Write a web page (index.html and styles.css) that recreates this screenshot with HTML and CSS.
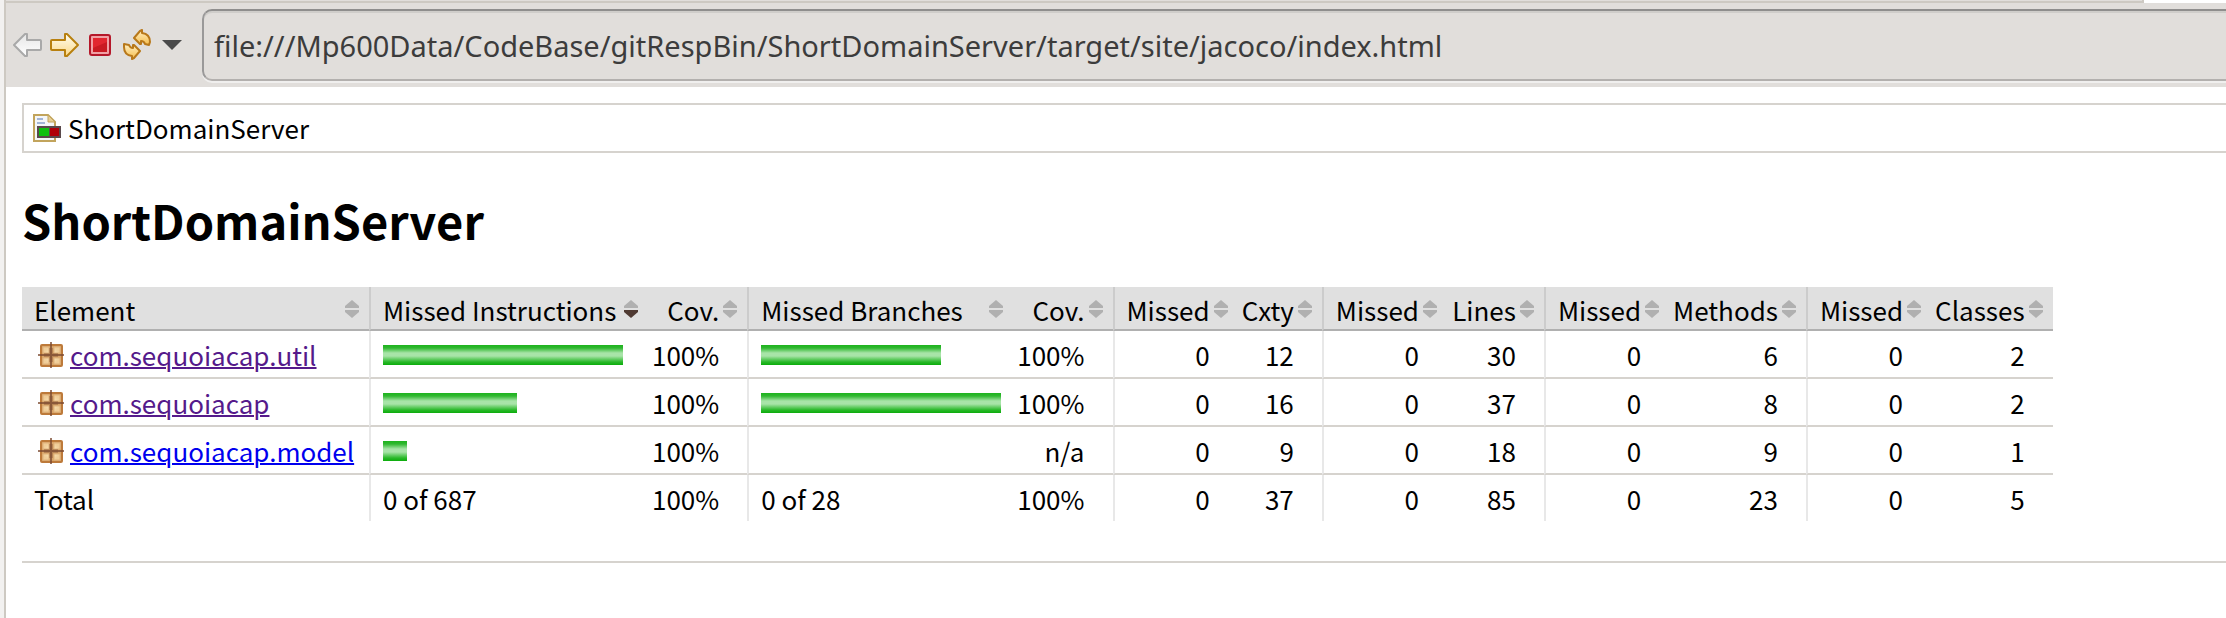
FILE: index.html
```html
<!DOCTYPE html>
<html lang="en">
<head>
<meta charset="utf-8">
<title>ShortDomainServer</title>
<link rel="stylesheet" href="styles.css">
</head>
<body>
<svg class="defs" aria-hidden="true">
  <defs>
    <linearGradient id="gold" x1="0" y1="0" x2="0" y2="1"><stop offset="0" stop-color="#fffdf0"/><stop offset="1" stop-color="#fbd98a"/></linearGradient>
    <linearGradient id="gold2" x1="0" y1="0" x2="0" y2="1"><stop offset="0" stop-color="#fff0c4"/><stop offset="1" stop-color="#f6bd4c"/></linearGradient>
    <linearGradient id="silver" x1="0" y1="0" x2="0" y2="1"><stop offset="0" stop-color="#e6e6e6"/><stop offset="1" stop-color="#ffffff"/></linearGradient>
    <radialGradient id="pane"><stop offset="0" stop-color="#ffeec4"/><stop offset="1" stop-color="#f0cd98"/></radialGradient>
    <symbol id="sort" viewBox="0 0 14 18"><path class="up" d="M7 0L14 6V8H0V6Z"/><path class="down" d="M0 10H14V12L7 18L0 12Z"/></symbol>
    <symbol id="package" viewBox="0 0 28 28">
      <rect x="4" y="4" width="21" height="21" rx="1" fill="#d8a468" stroke="#bd7a3a" stroke-width="2"/>
      <path d="M6 6H12V12H6ZM17 6H23V12H17ZM6 17H12V23H6ZM17 17H23V23H17Z" fill="url(#pane)" stroke="#e0b37c"/>
      <path d="M14 1V27M1 14H27" stroke="#7b4a30" stroke-opacity=".75" stroke-width="2"/>
      <path d="M14 7V21M7 14H21" stroke="#7b4a30" stroke-opacity=".35" stroke-width="4"/>
    </symbol>
  </defs>
</svg>
<div class="window">
  <div class="tab-edge"></div>
  <header class="toolbar">
    <nav class="tools" aria-label="Navigation">
      <button class="tool" aria-label="Back"><svg width="30" height="26" viewBox="0 0 30 26"><path d="M1 13L12 2H14V8H27Q28 8 28 9V17Q28 18 27 18H14V24H12Z" fill="url(#silver)" stroke="#a9a9a9" stroke-width="2" stroke-linejoin="round"/></svg></button>
      <button class="tool" aria-label="Forward"><svg width="30" height="26" viewBox="0 0 30 26"><path d="M28 13L17 2H15V8H2Q1 8 1 9V17Q1 18 2 18H15V24H17Z" fill="url(#gold)" stroke="#b8800f" stroke-width="2" stroke-linejoin="round"/></svg></button>
      <button class="tool tool-stop" aria-label="Stop"><svg width="22" height="22" viewBox="0 0 22 22"><rect x="1" y="1" width="20" height="20" rx="2" fill="#f0a0a4" stroke="#b5182a" stroke-width="2"/><rect x="4" y="4" width="14" height="14" fill="#e2262f"/><path d="M4 18V14L18 8V18Z" fill="#c91a22"/></svg></button>
      <button class="tool" aria-label="Refresh"><svg width="30" height="32" viewBox="0 0 30 32" fill="url(#gold2)" stroke="#b8781a" stroke-width="2" stroke-linejoin="round"><path d="M11 9L17 2L19 1V4Q27 5 27 13L26 16L22 15Q21 12 18 12V15H17Z"/><path d="M17 22L11 29L9 30V27Q1 26 1 18V15L6 16Q7 19 10 19V16H11Z"/></svg></button>
      <button class="tool" aria-label="History"><svg width="20" height="10" viewBox="0 0 20 10"><path d="M0 0H20L10 10Z" fill="#4a4a4a"/></svg></button>
    </nav>
    <input class="address" type="text" aria-label="Address" value="file:///Mp600Data/CodeBase/gitRespBin/ShortDomainServer/target/site/jacoco/index.html">
  </header>
  <main class="report">
    <div class="breadcrumb">
      <svg class="report-icon" width="30" height="30" viewBox="0 0 30 30">
        <path d="M2 2H16L23 9V28H2Z" fill="#f4f6f8" stroke="#c2a45c" stroke-width="2"/>
        <path d="M16 2V9H23Z" fill="#e7cf94" stroke="#c2a45c"/>
        <path d="M5 6H11M5 10H13" stroke="#a3b5d6" stroke-width="2"/>
        <rect x="5" y="13" width="24" height="12" fill="#5a4a4c"/>
        <rect x="7" y="15" width="10" height="8" fill="#10c010"/>
        <rect x="18" y="15" width="9" height="8" fill="#b00008"/>
      </svg>
      <span>ShortDomainServer</span>
    </div>
    <h1>ShortDomainServer</h1>
    <table class="coverage">
      <colgroup>
        <col class="col-element">
        <col class="col-instructions"><col class="col-cov">
        <col class="col-branches"><col class="col-cov">
        <col class="col-missed"><col class="col-cxty">
        <col class="col-missed"><col class="col-lines">
        <col class="col-missed"><col class="col-methods">
        <col class="col-missed"><col class="col-classes">
      </colgroup>
      <thead>
        <tr>
          <th><button class="sort"><span>Element</span><svg><use href="#sort"/></svg></button></th>
          <th class="group"><button class="sort sorted"><span>Missed Instructions</span><svg><use href="#sort"/></svg></button></th>
          <th class="total"><button class="sort count"><span>Cov.</span><svg><use href="#sort"/></svg></button></th>
          <th class="group"><button class="sort"><span>Missed Branches</span><svg><use href="#sort"/></svg></button></th>
          <th class="total"><button class="sort count"><span>Cov.</span><svg><use href="#sort"/></svg></button></th>
          <th class="group"><button class="sort count"><span>Missed</span><svg><use href="#sort"/></svg></button></th>
          <th class="total"><button class="sort count"><span>Cxty</span><svg><use href="#sort"/></svg></button></th>
          <th class="group"><button class="sort count"><span>Missed</span><svg><use href="#sort"/></svg></button></th>
          <th class="total"><button class="sort count"><span>Lines</span><svg><use href="#sort"/></svg></button></th>
          <th class="group"><button class="sort count"><span>Missed</span><svg><use href="#sort"/></svg></button></th>
          <th class="total"><button class="sort count"><span>Methods</span><svg><use href="#sort"/></svg></button></th>
          <th class="group"><button class="sort count"><span>Missed</span><svg><use href="#sort"/></svg></button></th>
          <th class="total"><button class="sort count"><span>Classes</span><svg><use href="#sort"/></svg></button></th>
        </tr>
      </thead>
      <tbody>
        <tr>
          <td><div class="element"><svg><use href="#package"/></svg><a class="visited" href="#util">com.sequoiacap.util</a></div></td>
          <td class="group"><div class="bar" style="width:240px"></div></td><td class="num total">100%</td>
          <td class="group"><div class="bar" style="width:180px"></div></td><td class="num total">100%</td>
          <td class="group num">0</td><td class="num total">12</td>
          <td class="group num">0</td><td class="num total">30</td>
          <td class="group num">0</td><td class="num total">6</td>
          <td class="group num">0</td><td class="num total">2</td>
        </tr>
        <tr>
          <td><div class="element"><svg><use href="#package"/></svg><a class="visited" href="#sequoiacap">com.sequoiacap</a></div></td>
          <td class="group"><div class="bar" style="width:134px"></div></td><td class="num total">100%</td>
          <td class="group"><div class="bar" style="width:240px"></div></td><td class="num total">100%</td>
          <td class="group num">0</td><td class="num total">16</td>
          <td class="group num">0</td><td class="num total">37</td>
          <td class="group num">0</td><td class="num total">8</td>
          <td class="group num">0</td><td class="num total">2</td>
        </tr>
        <tr>
          <td><div class="element"><svg><use href="#package"/></svg><a href="#model">com.sequoiacap.model</a></div></td>
          <td class="group"><div class="bar" style="width:24px"></div></td><td class="num total">100%</td>
          <td class="group"></td><td class="num total">n/a</td>
          <td class="group num">0</td><td class="num total">9</td>
          <td class="group num">0</td><td class="num total">18</td>
          <td class="group num">0</td><td class="num total">9</td>
          <td class="group num">0</td><td class="num total">1</td>
        </tr>
      </tbody>
      <tfoot>
        <tr>
          <td>Total</td>
          <td class="group">0 of 687</td><td class="num total">100%</td>
          <td class="group">0 of 28</td><td class="num total">100%</td>
          <td class="group num">0</td><td class="num total">37</td>
          <td class="group num">0</td><td class="num total">85</td>
          <td class="group num">0</td><td class="num total">23</td>
          <td class="group num">0</td><td class="num total">5</td>
        </tr>
      </tfoot>
    </table>
    <hr class="rule">
  </main>
</div>
</body>
</html>
```
FILE: styles.css
```css
* {
  box-sizing: border-box;
}

body {
  margin: 0;
  background: #f2f1f0;
  color: #000;
  font: 26px/38px "Noto Sans CJK SC", sans-serif;
}

button {
  border: 0;
  padding: 0;
  background: none;
  color: inherit;
  font: inherit;
}

.defs {
  position: absolute;
  width: 0;
  height: 0;
}

.window {
  min-height: 100vh;
  margin-left: 4px;
  border-left: 2px solid #cdc9c2;
  background: #fff;
  overflow: hidden;
}

.tab-edge {
  height: 3px;
  margin-right: 82px;
  border-right: 2px solid #cdc9c2;
  border-bottom: 2px solid #cdc9c2;
  background: #e1dedb;
}

.toolbar {
  display: flex;
  align-items: center;
  gap: 20px;
  padding: 6px 0 6px 7px;
  background: #e1dedb;
}

.tools {
  display: flex;
  align-items: center;
  gap: 7px;
}

.tool {
  display: flex;
}

.tool-stop {
  margin: 0 5px 0 2px;
}

.tool:last-child {
  margin-left: 2px;
}

.address {
  flex: 1;
  min-width: 0;
  height: 72px;
  padding: 0 10px;
  border: 2px solid #9a9999;
  border-top-color: #8f8e8d;
  border-bottom-color: #b3b0ae;
  border-right: 0;
  border-radius: 10px 0 0 10px;
  outline: 0;
  background: #e1dedb;
  box-shadow: inset 0 2px 0 #cfcdca, 0 2px 0 #f0efee;
  color: #3c3c3c;
  font: 29px "Noto Sans", sans-serif;
}

.report {
  padding: 16px 0 0 16px;
}

.breadcrumb {
  display: flex;
  align-items: center;
  gap: 6px;
  padding: 4px 8px;
  border: 2px solid #d6d3ce;
  border-right: 0;
}

h1 {
  margin: 37px 0;
  font-size: 47px;
  line-height: 60px;
}

.coverage {
  border-collapse: separate;
  border-spacing: 0;
  white-space: nowrap;
}

.col-element {
  width: 347px;
}

.col-instructions {
  width: 279px;
}

.col-branches {
  width: 266px;
}

.col-cov {
  width: 98px;
}

.col-missed {
  width: 125px;
}

.col-cxty {
  width: 84px;
}

.col-lines {
  width: 97px;
}

.col-methods {
  width: 132px;
}

.col-classes {
  width: 114px;
}

.coverage th {
  padding: 4px 10px 0 12px;
  border-bottom: 2px solid #b0b0b0;
  background: #e0e0e0;
  font-weight: normal;
}

.coverage td {
  padding: 5px 12px 3px;
  border-bottom: 2px solid #d6d3ce;
}

.coverage tfoot td {
  border-bottom: 0;
}

.coverage .group {
  border-left: 2px solid #e8e8e8;
}

.coverage th.group {
  border-left-color: #ccc;
}

.coverage .num {
  padding-right: 28px;
  text-align: right;
}

.coverage .total {
  padding-left: 4px;
}

.sort {
  display: flex;
  align-items: center;
  gap: 4px;
  width: 100%;
}

.sort span {
  flex: 1;
  text-align: left;
}

.sort.count span {
  text-align: right;
}

.sort svg {
  width: 14px;
  height: 18px;
  margin-bottom: 2px;
  fill: #b0b0b0;
  --down: #b0b0b0;
}

.sorted svg {
  --down: #4f3a32;
}

.down {
  fill: var(--down);
}

.element {
  display: flex;
  align-items: center;
  gap: 5px;
  padding-left: 3px;
}

.element svg {
  width: 28px;
  height: 28px;
}

a {
  color: #00e;
  text-decoration-thickness: 2px;
}

a.visited {
  color: #551a8b;
}

.bar {
  height: 20px;
  background: linear-gradient(#1db31d, #30b830 15%, #a8e4a8 40%, #a8e4a8 55%, #28b828 85%, #0cac0c);
}

.rule {
  margin: 40px 0 0;
  border: 0;
  border-top: 2px solid #d6d3ce;
}
```
